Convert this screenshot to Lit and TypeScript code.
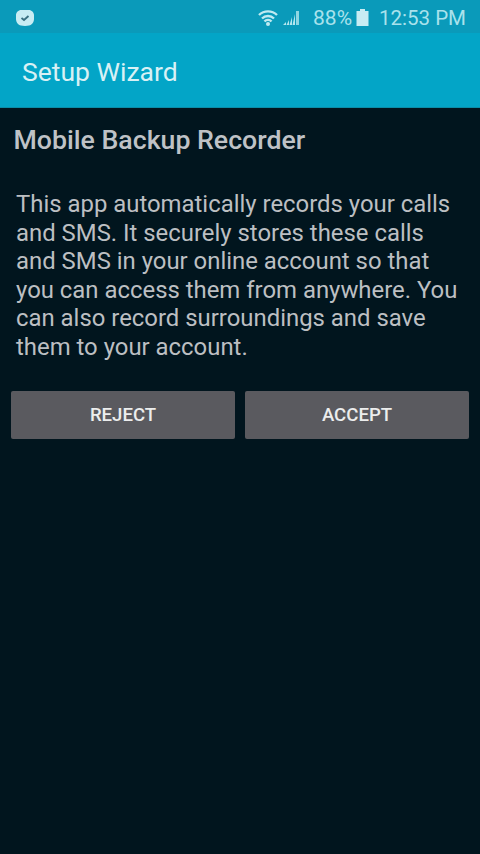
import { LitElement, html, css } from "lit";
import { customElement } from "lit/decorators.js";

@customElement("app-root")
export class AppRoot extends LitElement {
  static styles = css`
    :host {
      display: flex;
      flex-direction: column;
      width: 480px;
      height: 854px;
      background: #01151e;
      font-family: Roboto, "Liberation Sans", sans-serif;
      overflow: hidden;
    }
    .status {
      height: 33px;
      background: #0a9aba;
      display: flex;
      align-items: center;
      justify-content: space-between;
      padding: 2px 14px 0 15px;
      color: #a9e2ec;
      box-sizing: border-box;
    }
    .status-right {
      display: flex;
      align-items: center;
    }
    .pct {
      font-size: 21px;
      margin-left: 13px;
    }
    .time {
      font-size: 20.5px;
      margin-left: 9px;
    }
    .batt {
      margin-left: 4px;
    }
    .signal {
      margin-left: 5px;
    }
    svg {
      display: block;
    }
    .appbar {
      height: 75px;
      background: #03a5c7;
      display: flex;
      align-items: center;
      padding: 2px 0 0 22px;
      font-size: 26.5px;
      color: #d8f1f5;
      border-bottom: 1px solid #0b8da8;
      box-sizing: border-box;
    }
    .title {
      margin: 17px 0 0 13.5px;
      font-size: 26.7px;
      line-height: 30px;
      font-weight: 500;
      color: #bfc2c6;
    }
    .text {
      margin: 35px 16px 0 16px;
      font-size: 23.9px;
      line-height: 28.5px;
      color: #bcbfc2;
    }
    .buttons {
      display: flex;
      gap: 10px;
      margin: 30px 11px 0 11px;
    }
    .btn {
      flex: 1;
      height: 48px;
      background: #5a5a5f;
      border-radius: 2px;
      display: flex;
      align-items: center;
      justify-content: center;
      font-size: 18.6px;
      font-weight: 500;
      color: #eceded;
    }
  `;

  render() {
    return html`
      <div class="status">
        <svg width="20" height="18" viewBox="0 0 20 18">
          <path d="M6 1h8c2.500 0 5 2.500 5 5v4c0 3-2 6-5 6.500-2 .5-6 .5-8 0-3-.5-5-3.500-5-6.500V6c0-2.500 2.500-5 5-5z" fill="#c8ecf3" />
          <path d="M6.500 9l2.500 2 4.500-4" fill="none" stroke="#3a6f80" stroke-width="1.800" />
        </svg>
        <div class="status-right">
          <svg width="20" height="17" viewBox="0 0 20 17">
            <path d="M1 6a13 13 0 0 1 18 0M4 9.500a8.500 8.500 0 0 1 12 0M6.500 12.500a4.500 4.500 0 0 1 7 0" fill="none" stroke="#c0eaf1" stroke-width="2.400" />
            <circle cx="10" cy="15" r="2" fill="#c0eaf1" />
          </svg>
          <svg class="signal" width="17" height="14" viewBox="0 0 17 14">
            <path d="M0 14l3-3v3zM3.500 14l2.500-5v5zM6.500 14l2.500-8v8zM9.500 14l2.500-11v11z" fill="#b5e6ee" />
            <path d="M13 14V0h3v14z" fill="#8fd6e2" />
          </svg>
          <span class="pct">88%</span>
          <svg class="batt" width="14" height="19" viewBox="0 0 14 19">
            <path d="M4 1h5v2h3.500v15H.5V3H4z" fill="#c8ecf3" />
          </svg>
          <span class="time">12:53 PM</span>
        </div>
      </div>
      <div class="appbar">Setup Wizard</div>
      <div class="title">Mobile Backup Recorder</div>
      <div class="text">
        This app automatically records your calls and SMS. It securely stores these calls and SMS in your online account so that you can access them from anywhere. You can also record surroundings and save them to your account.
      </div>
      <div class="buttons">
        <div class="btn">REJECT</div>
        <div class="btn">ACCEPT</div>
      </div>
    `;
  }
}
